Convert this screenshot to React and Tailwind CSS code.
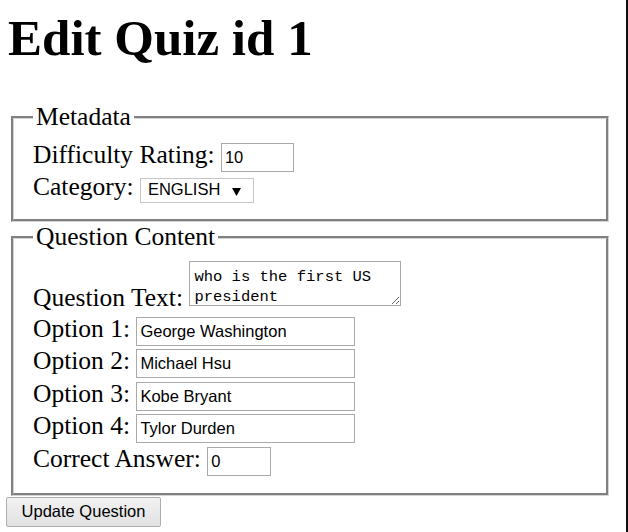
import React from 'react';

const TextField = ({ value, width }) => (
  <input
    type="text"
    defaultValue={value}
    className={`${width} h-[29px] border border-[#a9a9a9] bg-white px-[3px] align-baseline font-['Liberation_Sans',Arial,sans-serif] text-[16.5px] text-black outline-none`}
  />
);

const options = [
  { label: 'Option 1:', value: 'George Washington' },
  { label: 'Option 2:', value: 'Michael Hsu' },
  { label: 'Option 3:', value: 'Kobe Bryant' },
  { label: 'Option 4:', value: 'Tylor Durden' },
];

const App = () => {
  return (
    <div className="h-[532px] w-[628px] overflow-hidden border-r-2 border-[#111] bg-white text-black font-['Liberation_Serif','Times_New_Roman',serif]">
      <h1 className="ml-[8px] pt-[9px] text-[51px] font-bold leading-[58px]">Edit Quiz id 1</h1>

      <form onSubmit={(e) => e.preventDefault()}>
        {/* Metadata */}
        <fieldset className="mt-[36px] ml-[11px] w-[598px] border-[3px] border-[#d4d4d4] [border-style:groove] px-[19px] pt-[10px] pb-[14px] text-[25.5px] leading-[28px]">
          <legend className="px-[3px] leading-[28px]">Metadata</legend>
          <div className="h-[32px] whitespace-nowrap">
            Difficulty Rating:{' '}
            <TextField value="10" width="w-[73px]" />
          </div>
          <div className="h-[32px] whitespace-nowrap">
            Category:{' '}
            <span className="inline-flex h-[25px] w-[114px] items-start border border-[#c6c6c6] bg-white pt-[2px] pl-[7px] align-baseline font-['Liberation_Sans',Arial,sans-serif] text-[16.5px] leading-[16px]">
              ENGLISH
              <svg className="ml-[12px] self-center" width="9" height="8" viewBox="0 0 9 8">
                <path d="M0 0H9L4.5 8Z" fill="#000" />
              </svg>
            </span>
          </div>
        </fieldset>

        {/* Question Content */}
        <fieldset className="mt-[1px] ml-[11px] w-[598px] border-[3px] border-[#d4d4d4] [border-style:groove] px-[19px] pt-[10px] pb-[16px] text-[25.5px] leading-[28px]">
          <legend className="px-[3px] leading-[28px]">Question Content</legend>
          <div className="h-[53.5px] whitespace-nowrap">
            Question Text:{' '}
            <textarea
              defaultValue="who is the first US president"
              className="h-[45px] w-[212px] overflow-hidden whitespace-pre-wrap border border-[#a9a9a9] bg-white px-[4px] pt-[5px] align-baseline font-['Liberation_Mono','Courier_New',monospace] text-[15.5px] leading-[20px] text-black outline-none"
            />
          </div>
          {options.map((opt) => (
            <div key={opt.label} className="h-[32.5px] whitespace-nowrap">
              {opt.label}{' '}
              <TextField value={opt.value} width="w-[219px]" />
            </div>
          ))}
          <div className="h-[32px] whitespace-nowrap">
            Correct Answer:{' '}
            <TextField value="0" width="w-[64px]" />
          </div>
        </fieldset>

        <button
          type="submit"
          className="mt-[1px] ml-[6px] block h-[30px] w-[155px] rounded-[2px] border border-[#adadad] bg-linear-to-b from-[#f2f2f2] to-[#e1e1e1] font-['Liberation_Sans',Arial,sans-serif] text-[16.5px] text-black"
        >
          Update Question
        </button>
      </form>
    </div>
  );
};

export default App;
